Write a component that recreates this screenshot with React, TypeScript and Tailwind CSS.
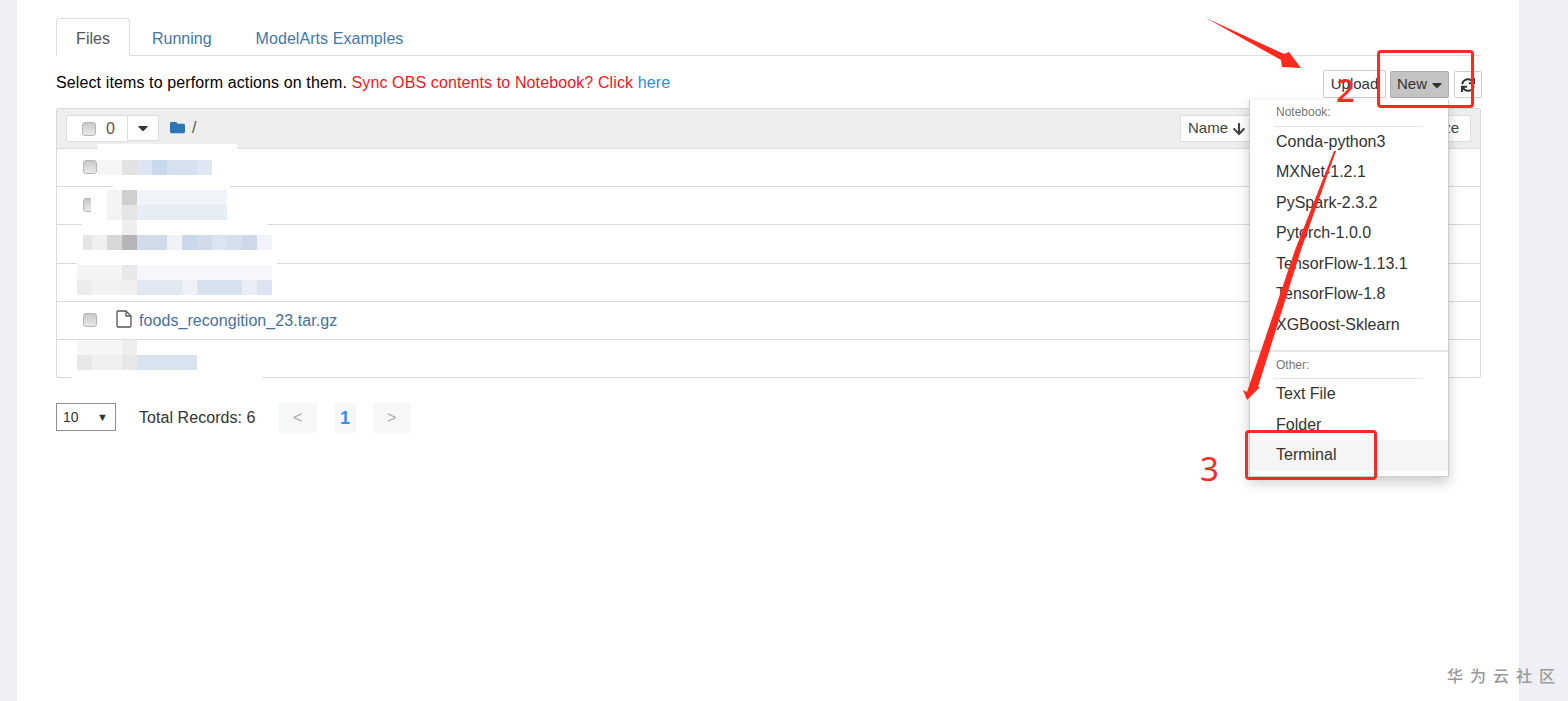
import { FaArrowDown, FaCaretDown, FaFolder, FaSync } from "react-icons/fa";

type Patch = [number, number, number, number, string];

// white smears hiding the file names
const SMEARS: Patch[] = [
  [97, 144, 140, 39, "#ffffff"],
  [113, 183, 117, 5, "#ffffff"],
  [91, 188, 139, 35, "#ffffff"],
  [82, 223, 185, 39, "#ffffff"],
  [77, 262, 200, 38, "#ffffff"],
  [72, 340, 190, 45, "#ffffff"],
];

// mosaic cells on top of the smears
const CELLS: Patch[] = [
  [97, 160, 25, 15, "#f5f5f5"],
  [122, 160, 15, 15, "#e2e2e2"],
  [137, 160, 15, 15, "#dce5f0"],
  [152, 160, 15, 15, "#c9d9ec"],
  [167, 160, 30, 15, "#d5e1ef"],
  [197, 160, 15, 15, "#dfe8f2"],
  [107, 190, 15, 30, "#f3f3f3"],
  [122, 190, 15, 15, "#cfcfcf"],
  [137, 190, 90, 15, "#f0f4f9"],
  [122, 205, 15, 15, "#e5e5e5"],
  [137, 205, 90, 15, "#e6edf5"],
  [122, 220, 15, 15, "#eeeeee"],
  [83, 235, 9, 15, "#e5e5e5"],
  [92, 235, 15, 15, "#f0f0f0"],
  [107, 235, 15, 15, "#d8d8d8"],
  [122, 235, 15, 15, "#b5b5b8"],
  [137, 235, 30, 15, "#cfdbe9"],
  [167, 235, 15, 15, "#f0f2f6"],
  [182, 235, 15, 15, "#c9d8ea"],
  [197, 235, 15, 15, "#cfdbea"],
  [212, 235, 15, 15, "#dbe5f1"],
  [227, 235, 15, 15, "#d5e0ee"],
  [242, 235, 15, 15, "#cdd9ea"],
  [257, 235, 15, 15, "#f0f4f9"],
  [77, 265, 45, 15, "#f4f4f4"],
  [122, 265, 15, 15, "#e8e8e8"],
  [137, 265, 135, 15, "#f5f7fb"],
  [77, 280, 15, 15, "#ececec"],
  [92, 280, 30, 15, "#f2f2f2"],
  [122, 280, 15, 15, "#f0f0f0"],
  [137, 280, 45, 15, "#e0e8f2"],
  [182, 280, 15, 15, "#eef2f8"],
  [197, 280, 45, 15, "#d8e2ef"],
  [242, 280, 15, 15, "#e8edf6"],
  [257, 280, 15, 15, "#dbe4f0"],
  [77, 340, 45, 15, "#f6f6f6"],
  [122, 340, 15, 15, "#eeeeee"],
  [77, 355, 15, 15, "#e8e8e8"],
  [92, 355, 30, 15, "#f0f0f0"],
  [122, 355, 15, 15, "#e8e8e8"],
  [137, 355, 60, 15, "#d9e3ef"],
];

const NOTEBOOKS = [
  "Conda-python3",
  "MXNet-1.2.1",
  "PySpark-2.3.2",
  "Pytorch-1.0.0",
  "TensorFlow-1.13.1",
  "TensorFlow-1.8",
  "XGBoost-Sklearn",
];

function Checkbox({ className = "" }: { className?: string }) {
  return (
    <span
      className={`block h-[14px] w-[14px] rounded-[3px] border border-[#b5b5b5] bg-gradient-to-b from-[#c9c9c9] to-[#e9e9e9] ${className}`}
    />
  );
}

function FileRow({ height, children }: { height: string; children?: React.ReactNode }) {
  return (
    <div className={`flex items-center border-b border-[#d9d9d9] pl-[26px] ${height}`}>
      <Checkbox className="mb-[2px]" />
      {children}
    </div>
  );
}

function MenuItem({ label, active }: { label: string; active?: boolean }) {
  return (
    <div className={`h-[30.5px] pl-[26px] leading-[30.5px] text-[#333] ${active ? "bg-[#f5f5f5]" : ""}`}>
      {label}
    </div>
  );
}

function MenuHeader({ label, height }: { label: string; height: string }) {
  return (
    <div className={`ml-[24px] mr-[25px] border-b border-[#e5e5e5] pl-[2px] text-[12px] leading-[24px] text-[#777] ${height}`}>
      {label}
    </div>
  );
}

export default function App() {
  return (
    <div className="relative h-[701px] w-[1568px] overflow-hidden bg-[#eef0f5] font-['Liberation_Sans','Noto_Sans_CJK_SC',sans-serif] text-[16px] text-black">
      <div className="ml-[17px] h-[701px] w-[1502px] bg-white pl-[39px] pr-[38px] pt-[18px]">
        {/* tabs */}
        <div className="flex h-[38px] border-b border-[#ddd]">
          <div className="h-[38px] w-[74px] rounded-t-[3px] border border-b-white border-[#ddd] bg-white text-center leading-[40px] text-[#555]">
            Files
          </div>
          <div className="ml-[22px] leading-[42px] text-[#4478aa]">Running</div>
          <div className="ml-[44px] leading-[42px] tracking-[0.06px] text-[#4478aa]">ModelArts Examples</div>
        </div>

        {/* toolbar */}
        <div className="-mr-px mt-[14px] flex h-[28px] items-start justify-between">
          <div className="leading-[25px] tracking-[0.115px]">
            Select items to perform actions on them.{" "}
            <span className="text-[#f5141e]">Sync OBS contents to Notebook? Click</span>{" "}
            <span className="text-[#2f8ae0]">here</span>
          </div>
          <div className="flex items-start text-[15px]">
            <div className="h-[28px] w-[63px] rounded-[2px] border border-[#ccc] text-center leading-[26px] text-[#333]">
              Upload
            </div>
            <div className="ml-[4px] mt-px flex h-[27px] w-[59px] items-center justify-center gap-[2px] rounded-[2px] border border-[#adadad] bg-[#c4c4c4] pl-[3px] text-[#333]">
              New <FaCaretDown size={16} />
            </div>
            <div className="ml-[5px] mt-px flex h-[27px] w-[28px] items-center justify-center rounded-[2px] border border-[#ccc] text-[#333]">
              <FaSync size={14} />
            </div>
          </div>
        </div>

        {/* file list */}
        <div className="mt-[10px] h-[270px] rounded-[2px] border border-[#d9d9d9]">
          <div className="flex h-[40px] items-start justify-between border-b border-[#d9d9d9] bg-[#eeeeee] pl-[9px] pr-[9px] pt-[6px]">
            <div className="flex items-start">
              <div className="flex h-[27px] w-[62px] items-center gap-[10px] rounded-l-[2px] border border-[#ddd] bg-white pl-[15px] text-[#555]">
                <Checkbox />0
              </div>
              <div className="-ml-px flex h-[26px] w-[32px] items-center justify-center border border-[#ddd] bg-white text-[#333]">
                <FaCaretDown size={16} />
              </div>
              <FaFolder size={15} className="ml-[11px] mt-[5px] text-[#2f76b9]" />
              <span className="ml-[7px] mt-[1px] text-[#555]">/</span>
            </div>
            <div className="flex h-[27px] w-[291px] items-center justify-between border border-[#ddd] bg-white pl-[7px] pr-[11px] text-[15px] text-[#444]">
              <span className="flex items-center gap-[4px]">
                Name <FaArrowDown size={14} />
              </span>
              <span>File size</span>
            </div>
          </div>
          <FileRow height="h-[38px]" />
          <FileRow height="h-[38px]" />
          <FileRow height="h-[39px]" />
          <FileRow height="h-[38px]" />
          <FileRow height="h-[38px]">
            <svg width="16" height="18" viewBox="0 0 16 18" className="mb-[4px] ml-[19px] text-[#555]" fill="none" stroke="currentColor" strokeWidth="1.3" strokeLinejoin="round">
              <path d="M1 2 Q1 1 2 1 H10 L15 6 V16 Q15 17 14 17 H2 Q1 17 1 16 Z" />
              <path d="M10 1 V6 H15" />
            </svg>
            <span className="ml-[7px] tracking-[0.06px] text-[#45719b]">foods_recongition_23.tar.gz</span>
          </FileRow>
          <FileRow height="h-[38px] border-b-0" />
        </div>

        {/* pager */}
        <div className="mt-[25px] flex items-start">
          <div className="flex h-[28px] w-[60px] items-center justify-between border border-[#8f8f8f] pl-[6px] pr-[7px] text-[14px] text-[#333]">
            10 <span className="text-[11px]">▼</span>
          </div>
          <div className="ml-[23px] leading-[29px] tracking-[0.06px] text-[#333]">Total Records: 6</div>
          <div className="ml-[23px] h-[30px] w-[38px] bg-[#f6f7f7] text-center leading-[30px] text-[#aaa]">&lt;</div>
          <div className="ml-[18px] h-[30px] w-[21px] bg-[#f6f7f7] text-center text-[18px] font-bold leading-[30px] text-[#3a8ee6]">1</div>
          <div className="ml-[17px] h-[30px] w-[38px] bg-[#f6f7f7] text-center leading-[30px] text-[#aaa]">&gt;</div>
        </div>
      </div>

      {/* mosaic over the blurred file names */}
      {SMEARS.concat(CELLS).map(([left, top, width, height, color], i) => (
        <div key={i} className="absolute" style={{ left, top, width, height, background: color }} />
      ))}

      {/* New dropdown */}
      <div className="absolute left-[1249px] top-[100px] h-[377px] w-[200px] border border-t-0 border-[#ccc] bg-white shadow-[0_6px_12px_rgba(0,0,0,0.2)]">
        <MenuHeader label="Notebook:" height="h-[26.5px]" />
        {NOTEBOOKS.map((name) => (
          <MenuItem key={name} label={name} />
        ))}
        <div className="mt-[10px] h-[2px] bg-[#e5e5e5]" />
        <MenuHeader label="Other:" height="h-[27px] pt-px" />
        <MenuItem label="Text File" />
        <MenuItem label="Folder" />
        <MenuItem label="Terminal" active />
      </div>

      {/* red annotations */}
      <svg className="absolute left-0 top-0" width="1568" height="701" viewBox="0 0 1568 701">
        <polygon points="1206,18 1284,54 1289,52 1301,68 1282,67 1281,60" fill="#ff2a1f" />
        <polygon points="1334,151 1336,151 1301,250 1258,387 1260,387 1247,400 1243,390 1247,392 1295,250" fill="#ff2a1f" />
      </svg>
      <div className="absolute left-[1377px] top-[50px] h-[58px] w-[97px] rounded-[4px] border-[3px] border-[#ff2a1f]" />
      <div className="absolute left-[1245px] top-[430px] h-[50px] w-[132px] rounded-[4px] border-[3px] border-[#ff2a1f]" />
      <div className="absolute left-[1336px] top-[70px] font-['Noto_Sans',sans-serif] text-[33px] font-medium leading-[40px] text-[#ff2a1f]">2</div>
      <div className="absolute left-[1200px] top-[449px] font-['Noto_Sans',sans-serif] text-[33px] leading-[40px] text-[#ff2a1f]">3</div>

      {/* watermark */}
      <div className="absolute left-[1447px] top-[665px] whitespace-nowrap font-['Noto_Sans_CJK_SC',sans-serif] text-[16px] font-medium leading-[20px] tracking-[7px] text-[#9a9a9a]">
        华为云社区
      </div>
    </div>
  );
}
